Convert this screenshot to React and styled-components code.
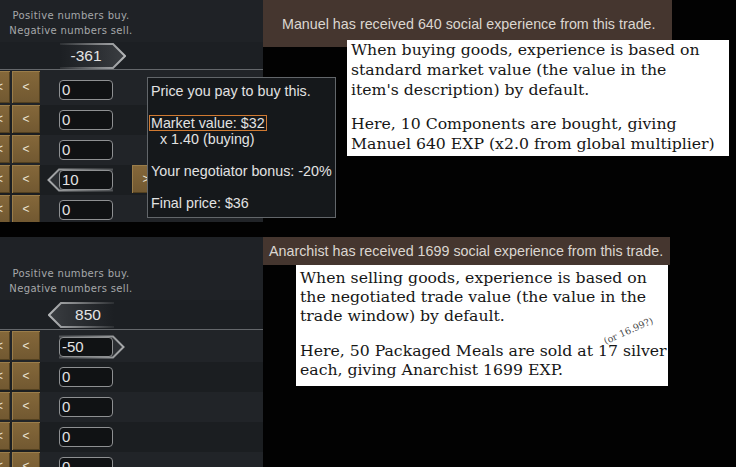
import React from "react";
import styled, { createGlobalStyle } from "styled-components";

const GlobalStyle = createGlobalStyle`
  html, body {
    margin: 0;
    padding: 0;
    background: #020202;
  }
  body {
    width: 736px;
    height: 467px;
    overflow: hidden;
    font-family: "Liberation Sans", Arial, sans-serif;
  }
`;

const Page = styled.div`
  width: 736px;
  height: 467px;
  background: #020202;
  display: flex;
  flex-direction: column;
  gap: 15px;
  overflow: hidden;
`;

const Section = styled.div`
  position: relative;
  display: flex;
  flex-shrink: 0;
  height: ${(p) => p.$h}px;
  overflow: hidden;
`;

const LeftPanel = styled.div`
  width: 263px;
  flex-shrink: 0;
  background: #1f2226;
  display: flex;
  flex-direction: column;
`;

const Header = styled.div`
  height: ${(p) => p.$h}px;
  width: 142px;
  flex-shrink: 0;
  box-sizing: border-box;
  display: flex;
  flex-direction: column;
  justify-content: flex-end;
  align-items: center;
  padding-bottom: 4px;
  color: #a6a8aa;
  font-family: "DejaVu Sans", "Noto Sans", sans-serif;
  font-size: 10px;
  letter-spacing: 0.35px;
  line-height: 15px;
`;

const TabRow = styled.div`
  height: ${(p) => p.$h}px;
  flex-shrink: 0;
  display: flex;
  align-items: center;
  padding-left: ${(p) => p.$left}px;
  background: #1c1f23;
  border-bottom: 1px solid #64676b;
`;

const TabBox = styled.div`
  position: relative;
  width: 66px;
  height: 26px;
  box-sizing: border-box;
  display: flex;
  align-items: center;
  justify-content: center;
  padding: ${(p) => (p.$dir === "left" ? "0 0 0 14px" : "0 14px 0 0")};
  color: #e4e4e4;
  font-size: 15.5px;
`;

const FrameSvg = styled.svg`
  position: absolute;
  left: 0;
  top: 0;
  pointer-events: none;
`;

const TabText = styled.span`
  position: relative;
`;

function Frame({ dir, w, h, tip, id }) {
  const mid = h / 2;
  const body = w - tip;
  const d = `M0 1 H${body} L${w - 1} ${mid} L${body} ${h - 1} H0`;
  return (
    <FrameSvg width={w} height={h} viewBox={`0 0 ${w} ${h}`}>
      <defs>
        <linearGradient id={`${id}f`} x1="0" x2="1" y1="0" y2="0">
          <stop offset="0" stopColor="#34373b" stopOpacity="0" />
          <stop offset="1" stopColor="#3b3e42" stopOpacity="1" />
        </linearGradient>
        <linearGradient id={`${id}s`} x1="0" x2="1" y1="0" y2="0">
          <stop offset="0" stopColor="#8a8c8e" stopOpacity="0.15" />
          <stop offset="0.6" stopColor="#9a9c9e" stopOpacity="0.8" />
          <stop offset="1" stopColor="#b4b6b8" stopOpacity="1" />
        </linearGradient>
      </defs>
      <g transform={dir === "left" ? `translate(${w},0) scale(-1,1)` : undefined}>
        <path d={d} fill={`url(#${id}f)`} stroke={`url(#${id}s)`} strokeWidth="2" />
      </g>
    </FrameSvg>
  );
}

function Tab({ dir, value, id }) {
  return (
    <TabBox $dir={dir}>
      <Frame dir={dir} w={66} h={26} tip={13} id={id} />
      <TabText>{value}</TabText>
    </TabBox>
  );
}

const List = styled.div`
  display: flex;
  flex-direction: column;
`;

const Row = styled.div`
  display: flex;
  flex-shrink: 0;
  height: ${(p) => p.$h}px;
  background: ${(p) => (p.$alt ? "#1b1e21" : "#212428")};
`;

const BtnGroup = styled.div`
  display: flex;
  gap: 2px;
  width: 40px;
  flex-shrink: 0;
  overflow: hidden;
  box-sizing: border-box;
  padding: ${(p) => (p.$first ? "1px 0 2px" : "0 0 2px")};
`;

const BrownBtn = styled.div`
  width: 28px;
  flex-shrink: 0;
  margin-left: ${(p) => p.$shift || 0}px;
  display: flex;
  align-items: center;
  justify-content: center;
  background: linear-gradient(#85683a, #715831);
  box-shadow: inset 1px 1px 0 #9a7d4a, inset -1px -1px 0 #52401f;
  color: #ece4d4;
  font-size: 12px;
`;

const SideBtn = styled(BrownBtn)`
  margin-left: 19px;
  margin-bottom: 2px;
`;

const InputWrap = styled.div`
  position: relative;
  width: 54px;
  height: 20px;
  margin-left: 19px;
  align-self: flex-end;
  margin-bottom: 5px;
  flex-shrink: 0;
`;

const PointerSvg = styled.svg`
  position: absolute;
  top: -2px;
  left: ${(p) => (p.$dir === "left" ? -12 : 0)}px;
  pointer-events: none;
`;

const InputBox = styled.div`
  position: relative;
  height: 100%;
  box-sizing: border-box;
  border: 1px solid #8e9092;
  border-radius: 4px;
  background: #101214;
  color: #e3e3e3;
  font-size: 15px;
  line-height: 18px;
  padding-left: 2px;
`;

function Pointer({ dir, id }) {
  return (
    <PointerSvg $dir={dir} width="66" height="24" viewBox="0 0 66 24">
      <defs>
        <linearGradient id={id} x1="0" x2="1" y1="0" y2="0">
          <stop offset="0" stopColor="#7c7e80" stopOpacity="0.5" />
          <stop offset="1" stopColor="#a8aaac" stopOpacity="1" />
        </linearGradient>
      </defs>
      <g transform={dir === "left" ? "translate(66,0) scale(-1,1)" : undefined}>
        <path d="M0 1.5 H54 L64.5 12 L54 22.5 H0" fill="#2b2e32" stroke={`url(#${id})`} strokeWidth="2" />
      </g>
    </PointerSvg>
  );
}

function TradeRow({ row, i, h }) {
  return (
    <Row $h={h} $alt={i % 2 === 1}>
      <BtnGroup $first={i === 0}>
        <BrownBtn $shift={-18}>&lt;&lt;</BrownBtn>
        <BrownBtn>&lt;</BrownBtn>
      </BtnGroup>
      <InputWrap>
        {row.pointer && <Pointer dir={row.pointer} id={`p${row.key}`} />}
        <InputBox>{row.v}</InputBox>
      </InputWrap>
      {row.sell && <SideBtn>&gt;</SideBtn>}
    </Row>
  );
}

const RightArea = styled.div`
  flex: 1;
  display: flex;
  flex-direction: column;
  background: #020202;
`;

const Banner = styled.div`
  width: ${(p) => p.$w}px;
  height: ${(p) => p.$h}px;
  flex-shrink: 0;
  box-sizing: border-box;
  display: flex;
  align-items: center;
  padding-left: ${(p) => p.$pad}px;
  background: #45362f;
  color: #dcd6d1;
  font-size: 14.3px;
  white-space: nowrap;
`;

const Note = styled.div`
  position: relative;
  flex-shrink: 0;
  margin-left: ${(p) => p.$left}px;
  margin-top: ${(p) => p.$top}px;
  width: ${(p) => p.$w}px;
  height: ${(p) => p.$h}px;
  box-sizing: border-box;
  padding: ${(p) => p.$pad}px 0 0 4px;
  background: #ffffff;
  color: #161616;
  font-family: "DejaVu Serif", "Liberation Serif", serif;
  font-size: 15.7px;
  line-height: ${(p) => p.$lh}px;
  white-space: nowrap;
`;

const Para = styled.p`
  margin: 0 0 ${(p) => p.$gap}px;
`;

const Aside = styled.span`
  position: absolute;
  left: 306px;
  top: 61px;
  font-family: "DejaVu Serif", serif;
  font-size: 9.5px;
  line-height: 10px;
  color: #4a4a4a;
  transform: rotate(-24deg);
`;

const Tooltip = styled.div`
  position: absolute;
  left: 147px;
  top: 77px;
  width: 189px;
  height: 141px;
  box-sizing: border-box;
  padding: 5px 3px 0 3px;
  background: #15181b;
  border: 1px solid #62666a;
  color: #e2e2e2;
  font-size: 14.3px;
  line-height: 16px;
  white-space: nowrap;
`;

const TipLine = styled.div`
  height: 16px;
  padding-left: ${(p) => p.$indent || 0}px;
`;

const Highlight = styled.span`
  display: inline-block;
  margin-left: -2px;
  padding: 0 1px;
  line-height: 14px;
  border: 1px solid #d07a32;
`;

const topRows = [
  { key: "a", v: "0" },
  { key: "b", v: "0" },
  { key: "c", v: "0" },
  { key: "d", v: "10", pointer: "left", sell: true },
  { key: "e", v: "0" },
];

const bottomRows = [
  { key: "f", v: "-50", pointer: "right" },
  { key: "g", v: "0" },
  { key: "h", v: "0" },
  { key: "i", v: "0" },
  { key: "j", v: "0" },
];

export default function App() {
  return (
    <Page>
      <GlobalStyle />
      <Section $h={222}>
        <LeftPanel>
          <Header $h={42}>
            <div>Positive numbers buy.</div>
            <div>Negative numbers sell.</div>
          </Header>
          <TabRow $h={27} $left={60}>
            <Tab dir="right" value="-361" id="t1" />
          </TabRow>
          <List>
            {topRows.map((r, i) => (
              <TradeRow key={r.key} row={r} i={i} h={i === 0 ? 35 : 30} />
            ))}
          </List>
        </LeftPanel>
        <RightArea>
          <Banner $w={409} $h={47} $pad={19}>
            Manuel has received 640 social experience from this trade.
          </Banner>
          <Note $left={84} $top={-7} $w={382} $h={116} $pad={0} $lh={20}>
            <Para $gap={14}>
              When buying goods, experience is based on
              <br />
              standard market value (the value in the
              <br />
              item's description) by default.
            </Para>
            <Para $gap={0}>
              Here, 10 Components are bought, giving
              <br />
              Manuel 640 EXP (x2.0 from global multiplier)
            </Para>
          </Note>
        </RightArea>
        <Tooltip>
          <TipLine>Price you pay to buy this.</TipLine>
          <TipLine />
          <TipLine>
            <Highlight>Market value: $32</Highlight>
          </TipLine>
          <TipLine $indent={9}>x 1.40 (buying)</TipLine>
          <TipLine />
          <TipLine>Your negotiator bonus: -20%</TipLine>
          <TipLine />
          <TipLine>Final price: $36</TipLine>
        </Tooltip>
      </Section>
      <Section $h={230}>
        <LeftPanel>
          <Header $h={63}>
            <div>Positive numbers buy.</div>
            <div>Negative numbers sell.</div>
          </Header>
          <TabRow $h={29} $left={48}>
            <Tab dir="left" value="850" id="t2" />
          </TabRow>
          <List>
            {bottomRows.map((r, i) => (
              <TradeRow key={r.key} row={r} i={i} h={i === 0 ? 32 : 30} />
            ))}
          </List>
        </LeftPanel>
        <RightArea>
          <Banner $w={407} $h={28} $pad={6}>
            Anarchist has received 1699 social experience from this trade.
          </Banner>
          <Note $left={33} $top={0} $w={372} $h={121} $pad={3} $lh={19}>
            <Para $gap={16}>
              When selling goods, experience is based on
              <br />
              the negotiated trade value (the value in the
              <br />
              trade window) by default.
            </Para>
            <Para $gap={0}>
              Here, 50 Packaged Meals are sold at 17 silver
              <br />
              each, giving Anarchist 1699 EXP.
            </Para>
            <Aside>(or 16.99?)</Aside>
          </Note>
        </RightArea>
      </Section>
    </Page>
  );
}
